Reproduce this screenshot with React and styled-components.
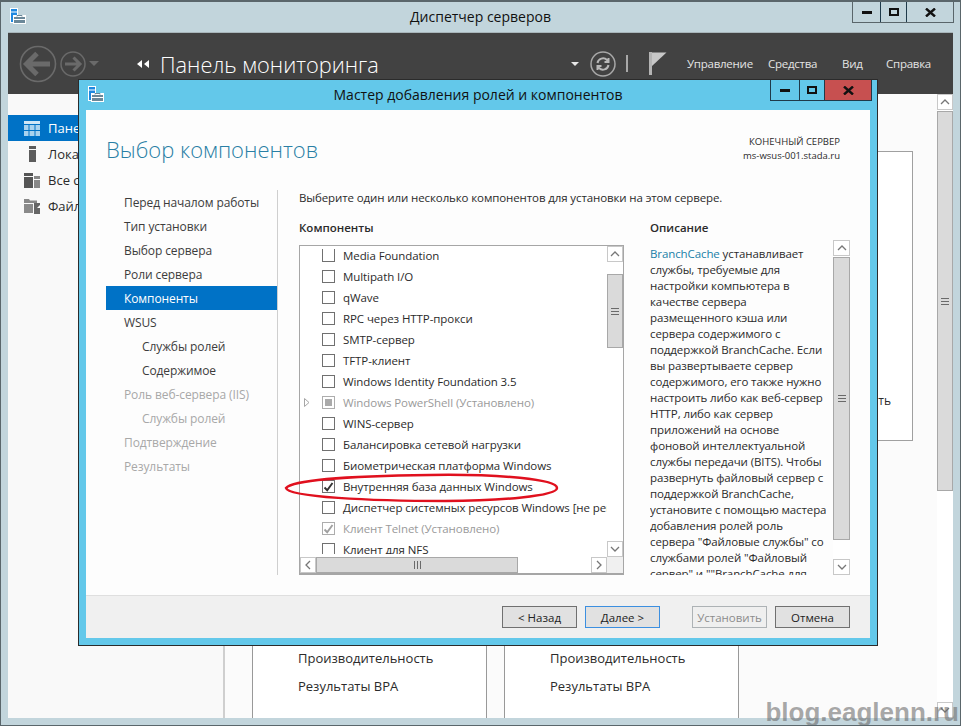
import React from 'react'
import styled, { createGlobalStyle } from 'styled-components'

const UI_FONT = `"Open Sans", "Noto Sans", "Liberation Sans", sans-serif`

const GlobalStyle = createGlobalStyle`
  * { box-sizing: border-box; }
  html, body { margin: 0; padding: 0; background: #fff; }
  body { font-family: ${UI_FONT}; font-size: 11.5px; color: #2b2b2b; }
`

const Screen = styled.div`
  position: relative;
  width: 961px;
  height: 726px;
  overflow: hidden;
  display: flex;
  flex-direction: column;
  background: #c2d5dc;
  border: 1px solid #5a666b;
  border-top-width: 2px;
  padding: 0 7px 7px;
`

const TitleBar = styled.div`
  display: grid;
  grid-template-columns: 1fr auto 1fr;
  align-items: start;
  height: ${p => p.$height}px;
  flex: none;
`

const TitleIcon = styled.div`
  display: flex;
  margin: ${p => p.$margin};
`

const TitleText = styled.div`
  font-size: 14px;
  color: #111;
  line-height: ${p => p.$height}px;
`

const WindowControls = styled.div`
  justify-self: end;
  display: flex;
  height: ${p => p.$height}px;
  margin-right: ${p => p.$right}px;
  border: 1px solid ${p => p.$line};
  border-top: none;
`

const ControlButton = styled.div`
  width: ${p => p.$width}px;
  display: flex;
  align-items: center;
  justify-content: center;
  background: ${p => p.$bg || 'transparent'};
  & + & { border-left: 1px solid ${p => p.$line}; }
`

const Toolbar = styled.div`
  flex: none;
  height: 62px;
  border-top: 1px solid #a9b6bb;
  background: #424242;
  display: flex;
  align-items: center;
  padding: 0 21px 0 11px;
  color: #fff;
`

const NavGroup = styled.div`
  display: flex;
  align-items: center;
  gap: 3px;
`

const Breadcrumb = styled.div`
  display: flex;
  align-items: center;
  gap: 11px;
  margin-left: 38px;
  color: #fff;
  flex: 1;
`

const BreadcrumbText = styled.div`
  margin-top: 2px;
  font-size: 21.8px;
  font-weight: 300;
`

const ToolGroup = styled.div`
  display: flex;
  align-items: center;
`

const CaretSlot = styled.div`
  display: flex;
  margin-right: 11px;
`

const ToolSeparator = styled.div`
  width: 2px;
  height: 17px;
  background: #a8a8a8;
  margin: 0 21px 0 10px;
`

const Menu = styled.div`
  display: grid;
  grid-template-columns: 81px 74px 44px 46px;
  margin-left: 20px;
`

const MenuItem = styled.div`
  font-size: 11.5px;
  letter-spacing: -0.25px;
  color: #e4e4e4;
  white-space: nowrap;
`

const Body = styled.div`
  flex: 1;
  min-height: 0;
  display: flex;
`

const Sidebar = styled.div`
  width: 217px;
  flex: none;
  background: #f9f9f9;
  border-right: 2px solid #cfcfcf;
  padding-top: 21px;
`

const SideItem = styled.div`
  height: 26px;
  display: flex;
  align-items: center;
  gap: 8px;
  padding-left: 16px;
  font-size: 13px;
  white-space: nowrap;
  color: ${p => (p.$active ? '#fff' : '#2b2b2b')};
  background: ${p => (p.$active ? '#0072c6' : 'transparent')};
`

const Content = styled.div`
  flex: 1;
  min-width: 0;
  background: #fbfbfb;
  padding: 57px 24px 0 27px;
  display: flex;
  flex-direction: column;
`

const QuickStart = styled.div`
  height: 290px;
  flex: none;
  background: #fff;
  border: 1px solid #a0a0a0;
  display: flex;
  align-items: flex-end;
  justify-content: flex-end;
  padding: 0 21px 31px 0;
  font-size: 12px;
  color: #2b2b2b;
`

const TileRow = styled.div`
  flex: 1;
  display: flex;
  margin-top: 10px;
  gap: 17px;
`

const Tile = styled.div`
  width: 235px;
  background: #fff;
  border-left: 1px solid #999;
  border-right: 1px solid #999;
  padding: 0 0 23px 45px;
  display: flex;
  flex-direction: column;
  justify-content: flex-end;
  gap: 10px;
`

const TileLink = styled.div`
  font-size: 13px;
  line-height: 18px;
  color: #2b2b2b;
`

/* scrollbars */
const Scroll = styled.div`
  flex: none;
  display: flex;
  flex-direction: ${p => (p.$horizontal ? 'row' : 'column')};
  width: ${p => (p.$horizontal ? 'auto' : `${p.$size || 16}px`)};
  height: ${p => (p.$horizontal ? `${p.$size || 16}px` : 'auto')};
  background: #fff;
`

const ScrollButton = styled.div`
  flex: none;
  width: ${p => (p.$horizontal ? '16px' : '100%')};
  height: ${p => (p.$horizontal ? '100%' : '16px')};
  display: flex;
  align-items: center;
  justify-content: center;
  background: #fff;
  border: 1px solid #c8c8c8;
`

const Thumb = styled.div`
  flex: none;
  background: #dadada;
  border: 1px solid #a8a8a8;
  display: flex;
  align-items: center;
  justify-content: center;
  width: ${p => (p.$horizontal ? `${p.$length}px` : '100%')};
  height: ${p => (p.$horizontal ? '100%' : `${p.$length}px`)};
  margin-top: ${p => (p.$horizontal ? 0 : p.$offset || 0)}px;
  margin-left: ${p => (p.$horizontal ? p.$offset || 0 : 0)}px;
`

const Grip = styled.div`
  width: ${p => (p.$horizontal ? '7px' : '8px')};
  height: ${p => (p.$horizontal ? '8px' : '7px')};
  background: repeating-linear-gradient(
    ${p => (p.$horizontal ? '90deg' : '0deg')},
    #6a6a6a 0 1px,
    transparent 1px 3px
  );
`

const ScrollSpacer = styled.div`
  flex: 1;
`

/* wizard dialog */
const Dialog = styled.div`
  position: absolute;
  left: 77px;
  top: 77px;
  width: 800px;
  height: 567px;
  display: flex;
  flex-direction: column;
  background: #63c8ea;
  border: 1px solid #2b2b2b;
  padding: 0 7px 7px;
`

const DialogBody = styled.div`
  flex: 1;
  min-height: 0;
  display: flex;
  flex-direction: column;
  background: #fdfdfd;
`

const DialogHeader = styled.div`
  height: 80px;
  flex: none;
  display: flex;
  justify-content: space-between;
  padding: 14px 30px 0 20px;
`

const DialogHeading = styled.div`
  font-size: 22px;
  font-weight: 300;
  line-height: 50px;
  color: #2a7fa5;
`

const ServerInfo = styled.div`
  margin-top: 11px;
  text-align: right;
  font-size: 9.5px;
  line-height: 14px;
  color: #2b2b2b;
`

const WizardColumns = styled.div`
  height: 385px;
  flex: none;
  display: flex;
  padding-left: 20px;
  margin-bottom: 20px;
`

const StepList = styled.div`
  width: 171px;
  flex: none;
  border-right: 1px solid #cfcfcf;
  margin-right: 21px;
  box-sizing: content-box;
`

const Step = styled.div`
  height: 24px;
  display: flex;
  align-items: center;
  font-size: 12px;
  letter-spacing: -0.1px;
  white-space: nowrap;
  padding-left: ${p => (p.$sub ? 36 : 18)}px;
  color: ${p => (p.$active ? '#fff' : p.$disabled ? '#a8a8a8' : '#3c3c3c')};
  background: ${p => (p.$active ? '#0072c6' : 'transparent')};
`

const WizardMain = styled.div`
  flex: 1;
  min-width: 0;
  display: flex;
  flex-direction: column;
`

const Prompt = styled.div`
  height: 15px;
  font-size: 11.5px;
  letter-spacing: -0.11px;
  line-height: 15px;
  color: #2b2b2b;
`

const Panes = styled.div`
  flex: 1;
  min-height: 0;
  display: grid;
  grid-template-columns: 325px 200px;
  column-gap: 26px;
  margin-top: 15px;
`

const Pane = styled.div`
  display: flex;
  flex-direction: column;
  min-height: 0;
`

const PaneLabel = styled.div`
  height: 16px;
  font-size: 11.5px;
  font-weight: 600;
  line-height: 16px;
  color: #2b2b2b;
`

const ListBox = styled.div`
  margin-top: 9px;
  flex: 1;
  min-height: 0;
  display: grid;
  grid-template-columns: 1fr 16px;
  grid-template-rows: 1fr 16px;
  border: 1px solid #a6a6a6;
  border-bottom-width: 2px;
  background: #fff;
`

const ListViewport = styled.div`
  min-width: 0;
  min-height: 0;
  overflow: hidden;
  background: #fff;
  padding-bottom: 3px;
`

const ListClip = styled.div`
  height: calc(100% + 1px);
  margin-top: -1px;
  overflow: hidden;
`

const ListRow = styled.div`
  height: 21px;
  display: flex;
  align-items: center;
  white-space: nowrap;
  overflow: hidden;
  font-size: 11.5px;
  letter-spacing: -0.08px;
  color: ${p => (p.$muted ? '#9a9a9a' : '#2b2b2b')};
  padding-left: 1px;
`

const Expander = styled.div`
  width: 21px;
  flex: none;
  display: flex;
  padding-left: 3px;
`

const Check = styled.div`
  width: 13px;
  height: 13px;
  flex: none;
  margin-right: 8px;
  background: #fff;
  border: 1px solid ${p => (p.$muted ? '#adadad' : '#707070')};
  border-top: ${p => (p.$cut ? 'none' : undefined)};
  display: flex;
  align-items: center;
  justify-content: center;
`

const MixedMark = styled.div`
  width: 7px;
  height: 7px;
  background: #aaa;
`

const Corner = styled.div`
  background: #f0f0f0;
`

const DescriptionRow = styled.div`
  flex: 1;
  min-height: 0;
  display: flex;
  justify-content: space-between;
  margin-top: 4px;
`

const DescriptionText = styled.div`
  margin-top: 6px;
  overflow: hidden;
  font-size: 11.5px;
  letter-spacing: -0.1px;
  line-height: 16px;
  color: #2b2b2b;
  white-space: nowrap;
`

const LearnLink = styled.span`
  color: #1a7fa8;
`

const Footer = styled.div`
  flex: 1;
  min-height: 0;
  background: #f0f0f0;
  border-top: 1px solid #dfdfdf;
  display: flex;
  align-items: flex-start;
  padding: 10px 20px 0 0;
  justify-content: flex-end;
`

const WizardButton = styled.div`
  width: 75px;
  height: 22px;
  display: flex;
  align-items: center;
  justify-content: center;
  font-size: 11.5px;
  background: ${p => (p.$disabled ? '#efefef' : '#e1e1e1')};
  color: ${p => (p.$disabled ? '#8c8c8c' : '#222')};
  border: 1px solid ${p => (p.$disabled ? '#adb2b5' : p.$focus ? '#3c8fe0' : '#707070')};
  margin-left: ${p => p.$gap}px;
`

const RedMark = styled.svg`
  position: absolute;
  left: 279px;
  top: 466px;
`

const Watermark = styled.div`
  position: absolute;
  right: 1px;
  bottom: -2px;
  font-family: "Liberation Sans", Arial, sans-serif;
  font-weight: 700;
  font-size: 26px;
  line-height: 30px;
  color: rgba(110, 110, 110, 0.6);
  white-space: nowrap;
`

const Chevron = ({ dir }) => {
  const d = {
    up: 'M1 6 L5 2 L9 6',
    down: 'M1 2 L5 6 L9 2',
    left: 'M6 1 L2 5 L6 9',
    right: 'M2 1 L6 5 L2 9',
  }[dir]
  const box = dir === 'up' || dir === 'down' ? [10, 8] : [8, 10]
  return (
    <svg width={box[0]} height={box[1]} viewBox={`0 0 ${box[0]} ${box[1]}`}>
      <path d={d} fill="none" stroke="#777" strokeWidth="1.3" />
    </svg>
  )
}

const MinIcon = () => (
  <svg width="10" height="3"><rect width="10" height="3" fill="#111" /></svg>
)
const MaxIcon = () => (
  <svg width="10" height="8"><rect x="1" y="1" width="8" height="6" fill="none" stroke="#111" strokeWidth="2" /></svg>
)
const CloseIcon = () => (
  <svg width="11" height="9" viewBox="0 0 11 9"><path d="M1 0.5 L10 8.5 M10 0.5 L1 8.5" stroke="#111" strokeWidth="2.4" /></svg>
)

const ServerManagerIcon = () => (
  <svg width="16" height="16" viewBox="0 0 16 16">
    <rect x="0" y="0" width="8" height="15" fill="#fff" />
    <rect x="1" y="1" width="6" height="2.5" fill="#1e88e0" />
    <rect x="1" y="4.5" width="6" height="9.5" fill="#1e88e0" />
    <rect x="3" y="7" width="13" height="9" fill="#fff" />
    <rect x="4" y="9" width="11" height="6" fill="#6b8899" />
    <rect x="4" y="11" width="11" height="1" fill="#fff" />
    <path d="M7 8.5 V7.5 H12 V8.5" fill="none" stroke="#6b8899" />
  </svg>
)

const BackIcon = () => (
  <svg width="38" height="38" viewBox="0 0 38 38">
    <circle cx="19" cy="19" r="17.5" fill="none" stroke="#6a6a6a" strokeWidth="1.6" />
    <path d="M7 19 H31 M18 8.5 L7.5 19 L18 29.5" fill="none" stroke="#6a6a6a" strokeWidth="5" />
  </svg>
)
const ForwardIcon = () => (
  <svg width="26" height="26" viewBox="0 0 26 26">
    <circle cx="13" cy="13" r="12" fill="none" stroke="#6a6a6a" strokeWidth="1.5" />
    <path d="M5 13 H20 M13.5 6.5 L20 13 L13.5 19.5" fill="none" stroke="#6a6a6a" strokeWidth="3" />
  </svg>
)
const Caret = ({ color, w = 10, h = 5 }) => (
  <svg width={w} height={h} viewBox={`0 0 ${w} ${h}`}>
    <path d={`M0 0 H${w} L${w / 2} ${h} Z`} fill={color} />
  </svg>
)
const BackDouble = () => (
  <svg width="12" height="8" viewBox="0 0 12 8">
    <path d="M5 0 V8 L0 4 Z M12 0 V8 L7 4 Z" fill="#fff" />
  </svg>
)
const RefreshIcon = () => (
  <svg width="26" height="26" viewBox="0 0 26 26">
    <circle cx="13" cy="13" r="12" fill="none" stroke="#a8a8a8" strokeWidth="1.5" />
    <path d="M7.5 12 A5.6 5.6 0 0 1 17 9 L18.5 10.5 M18.5 7 V11 H14.5" fill="none" stroke="#b8b8b8" strokeWidth="2" />
    <path d="M18.5 14 A5.6 5.6 0 0 1 9 17 L7.5 15.5 M7.5 19 V15 H11.5" fill="none" stroke="#b8b8b8" strokeWidth="2" />
  </svg>
)
const FlagIcon = () => (
  <svg width="18" height="23" viewBox="0 0 18 23">
    <rect x="0" y="0" width="3" height="23" fill="#b4b4b4" />
    <path d="M3 0.5 H17.5 L3 14 Z" fill="#c8c8c8" />
  </svg>
)

const DashIcon = () => (
  <svg width="16" height="15" viewBox="0 0 16 15">
    <rect width="16" height="3" fill="#cfe6f6" />
    <path d="M0 4 H4.5 V9 H0 Z M5.5 4 H10.5 V9 H5.5 Z M11.5 4 H16 V9 H11.5 Z M0 10 H4.5 V15 H0 Z M5.5 10 H10.5 V15 H5.5 Z M11.5 10 H16 V15 H11.5 Z" fill="#a9d2ee" />
  </svg>
)
const LocalIcon = () => (
  <svg width="16" height="16" viewBox="0 0 16 16">
    <rect x="5" y="0" width="7" height="3" fill="#5c5c5c" />
    <rect x="5" y="4" width="7" height="12" fill="#5c5c5c" />
  </svg>
)
const AllIcon = () => (
  <svg width="16" height="15" viewBox="0 0 16 15">
    <rect x="0" y="0" width="9" height="3" fill="#555" />
    <rect x="0" y="4" width="9" height="11" fill="#555" />
    <rect x="10" y="3" width="6" height="3" fill="#888" />
    <rect x="10" y="7" width="6" height="8" fill="#888" />
  </svg>
)
const FilesIcon = () => (
  <svg width="16" height="15" viewBox="0 0 16 15">
    <path d="M0 0 H5 L6 1.5 H13 V4 H0 Z" fill="#888" />
    <rect x="0" y="5" width="9" height="9" fill="#8a8a8a" />
    <path d="M10 4 H16 V15 H10 Z" fill="#666" />
    <path d="M13 9 L16 9 L16 6 Z" fill="#fff" />
  </svg>
)

const Tick = ({ color }) => (
  <svg width="11" height="10" viewBox="0 0 11 10">
    <path d="M1.5 5.5 L4.2 8.2 L9.5 1" fill="none" stroke={color} strokeWidth="1.9" />
  </svg>
)

const components = [
  { name: 'Media Foundation', cut: true },
  { name: 'Multipath I/O' },
  { name: 'qWave' },
  { name: 'RPC через HTTP-прокси' },
  { name: 'SMTP-сервер' },
  { name: 'TFTP-клиент' },
  { name: 'Windows Identity Foundation 3.5' },
  { name: 'Windows PowerShell (Установлено)', mixed: true, muted: true, expand: true },
  { name: 'WINS-сервер' },
  { name: 'Балансировка сетевой нагрузки' },
  { name: 'Биометрическая платформа Windows' },
  { name: 'Внутренняя база данных Windows', checked: true },
  { name: 'Диспетчер системных ресурсов Windows [не рекомендуется]' },
  { name: 'Клиент Telnet (Установлено)', checked: true, muted: true },
  { name: 'Клиент для NFS' },
]

const steps = [
  { name: 'Перед началом работы' },
  { name: 'Тип установки' },
  { name: 'Выбор сервера' },
  { name: 'Роли сервера' },
  { name: 'Компоненты', active: true },
  { name: 'WSUS' },
  { name: 'Службы ролей', sub: true },
  { name: 'Содержимое', sub: true },
  { name: 'Роль веб-сервера (IIS)', disabled: true },
  { name: 'Службы ролей', sub: true, disabled: true },
  { name: 'Подтверждение', disabled: true },
  { name: 'Результаты', disabled: true },
]

const description = [
  'службы, требуемые для',
  'настройки компьютера в',
  'качестве сервера',
  'размещенного кэша или',
  'сервера содержимого с',
  'поддержкой BranchCache. Если',
  'вы развертываете сервер',
  'содержимого, его также нужно',
  'настроить либо как веб-сервер',
  'HTTP, либо как сервер',
  'приложений на основе',
  'фоновой интеллектуальной',
  'службы передачи (BITS). Чтобы',
  'развернуть файловый сервер с',
  'поддержкой BranchCache,',
  'установите с помощью мастера',
  'добавления ролей роль',
  'сервера "Файловые службы" со',
  'службами ролей "Файловый',
  'сервер" и ""BranchCache для',
]

const App = () => (
  <Screen>
    <GlobalStyle />
    <TitleBar $height={30}>
      <TitleIcon $margin="6px 0 0 2px"><ServerManagerIcon /></TitleIcon>
      <TitleText $height={30}>Диспетчер серверов</TitleText>
      <WindowControls $height={21} $right={-1} $line="#5a666b">
        <ControlButton $width={27} $line="#5a666b"><MinIcon /></ControlButton>
        <ControlButton $width={26} $line="#5a666b"><MaxIcon /></ControlButton>
        <ControlButton $width={47} $line="#5a666b"><CloseIcon /></ControlButton>
      </WindowControls>
    </TitleBar>

    <Toolbar>
      <NavGroup>
        <BackIcon />
        <ForwardIcon />
        <Caret color="#6a6a6a" />
      </NavGroup>
      <Breadcrumb>
        <BackDouble />
        <BreadcrumbText>Панель мониторинга</BreadcrumbText>
      </Breadcrumb>
      <ToolGroup>
        <CaretSlot><Caret color="#e8e8e8" w={8} h={4} /></CaretSlot>
        <RefreshIcon />
        <ToolSeparator />
        <FlagIcon />
        <Menu>
          <MenuItem>Управление</MenuItem>
          <MenuItem>Средства</MenuItem>
          <MenuItem>Вид</MenuItem>
          <MenuItem>Справка</MenuItem>
        </Menu>
      </ToolGroup>
    </Toolbar>

    <Body>
      <Sidebar>
        <SideItem $active><DashIcon />Панель мониторинга</SideItem>
        <SideItem><LocalIcon />Локальный сервер</SideItem>
        <SideItem><AllIcon />Все серверы</SideItem>
        <SideItem><FilesIcon />Файловые службы</SideItem>
      </Sidebar>
      <Content>
        <QuickStart>ить</QuickStart>
        <TileRow>
          <Tile>
            <TileLink>Производительность</TileLink>
            <TileLink>Результаты BPA</TileLink>
          </Tile>
          <Tile>
            <TileLink>Производительность</TileLink>
            <TileLink>Результаты BPA</TileLink>
          </Tile>
        </TileRow>
      </Content>
      <Scroll>
        <ScrollButton><Chevron dir="up" /></ScrollButton>
        <Thumb $length={380} $offset={1}><Grip /></Thumb>
        <ScrollSpacer />
        <ScrollButton><Chevron dir="down" /></ScrollButton>
      </Scroll>
    </Body>

    <Dialog>
      <TitleBar $height={30}>
        <TitleIcon $margin="6px 0 0 2px"><ServerManagerIcon /></TitleIcon>
        <TitleText $height={30}>Мастер добавления ролей и компонентов</TitleText>
        <WindowControls $height={21} $right={-2} $line="#1f3a4a">
          <ControlButton $width={28} $line="#1f3a4a"><MinIcon /></ControlButton>
          <ControlButton $width={25} $line="#1f3a4a"><MaxIcon /></ControlButton>
          <ControlButton $width={47} $line="#1f3a4a" $bg="#c75050"><CloseIcon /></ControlButton>
        </WindowControls>
      </TitleBar>
      <DialogBody>
        <DialogHeader>
          <DialogHeading>Выбор компонентов</DialogHeading>
          <ServerInfo>
            <div>КОНЕЧНЫЙ СЕРВЕР</div>
            <div>ms-wsus-001.stada.ru</div>
          </ServerInfo>
        </DialogHeader>
        <WizardColumns>
          <StepList>
            {steps.map(s => (
              <Step key={s.name + s.sub + s.disabled} $sub={s.sub} $active={s.active} $disabled={s.disabled}>{s.name}</Step>
            ))}
          </StepList>
          <WizardMain>
            <Prompt>Выберите один или несколько компонентов для установки на этом сервере.</Prompt>
            <Panes>
              <Pane>
                <PaneLabel>Компоненты</PaneLabel>
                <ListBox>
                  <ListViewport>
                    <ListClip>
                      {components.map(c => (
                        <ListRow key={c.name} $muted={c.muted}>
                          <Expander>
                            {c.expand && (
                              <svg width="6" height="9" viewBox="0 0 6 9">
                                <path d="M0.5 0.5 L5 4.5 L0.5 8.5 Z" fill="#fff" stroke="#a6a6a6" />
                              </svg>
                            )}
                          </Expander>
                          <Check $muted={c.muted} $cut={c.cut}>
                            {c.mixed && <MixedMark />}
                            {c.checked && <Tick color={c.muted ? '#a0a0a0' : '#333'} />}
                          </Check>
                          {c.name}
                        </ListRow>
                      ))}
                    </ListClip>
                  </ListViewport>
                  <Scroll>
                    <ScrollButton><Chevron dir="up" /></ScrollButton>
                    <Thumb $length={74} $offset={12}><Grip /></Thumb>
                    <ScrollSpacer />
                    <ScrollButton><Chevron dir="down" /></ScrollButton>
                  </Scroll>
                  <Scroll $horizontal>
                    <ScrollButton $horizontal><Chevron dir="left" /></ScrollButton>
                    <Thumb $horizontal $length={202}><Grip $horizontal /></Thumb>
                    <ScrollSpacer />
                    <ScrollButton $horizontal><Chevron dir="right" /></ScrollButton>
                  </Scroll>
                  <Corner />
                </ListBox>
              </Pane>
              <Pane>
                <PaneLabel>Описание</PaneLabel>
                <DescriptionRow>
                  <DescriptionText>
                    <div><LearnLink>BranchCache</LearnLink> устанавливает</div>
                    {description.map(line => <div key={line}>{line}</div>)}
                  </DescriptionText>
                  <Scroll $size={17}>
                    <ScrollButton><Chevron dir="up" /></ScrollButton>
                    <Thumb $length={283} $offset={1}><Grip /></Thumb>
                    <ScrollSpacer />
                    <ScrollButton><Chevron dir="down" /></ScrollButton>
                  </Scroll>
                </DescriptionRow>
              </Pane>
            </Panes>
          </WizardMain>
        </WizardColumns>
        <Footer>
          <WizardButton>&lt; Назад</WizardButton>
          <WizardButton $focus $gap={8}>Далее &gt;</WizardButton>
          <WizardButton $disabled $gap={32}>Установить</WizardButton>
          <WizardButton $gap={8}>Отмена</WizardButton>
        </Footer>
      </DialogBody>
    </Dialog>

    <RedMark width="284" height="36" viewBox="0 0 284 36">
      <path d="M6 20 C12 13 60 8 150 7 C220 6 277 11 277 20 C277 28 220 33 165 33 C90 33 8 29 6 20 Z" fill="none" stroke="#e0101e" strokeWidth="2.5" />
    </RedMark>
    <Watermark>blog.eaglenn.ru</Watermark>
  </Screen>
)

export default App
